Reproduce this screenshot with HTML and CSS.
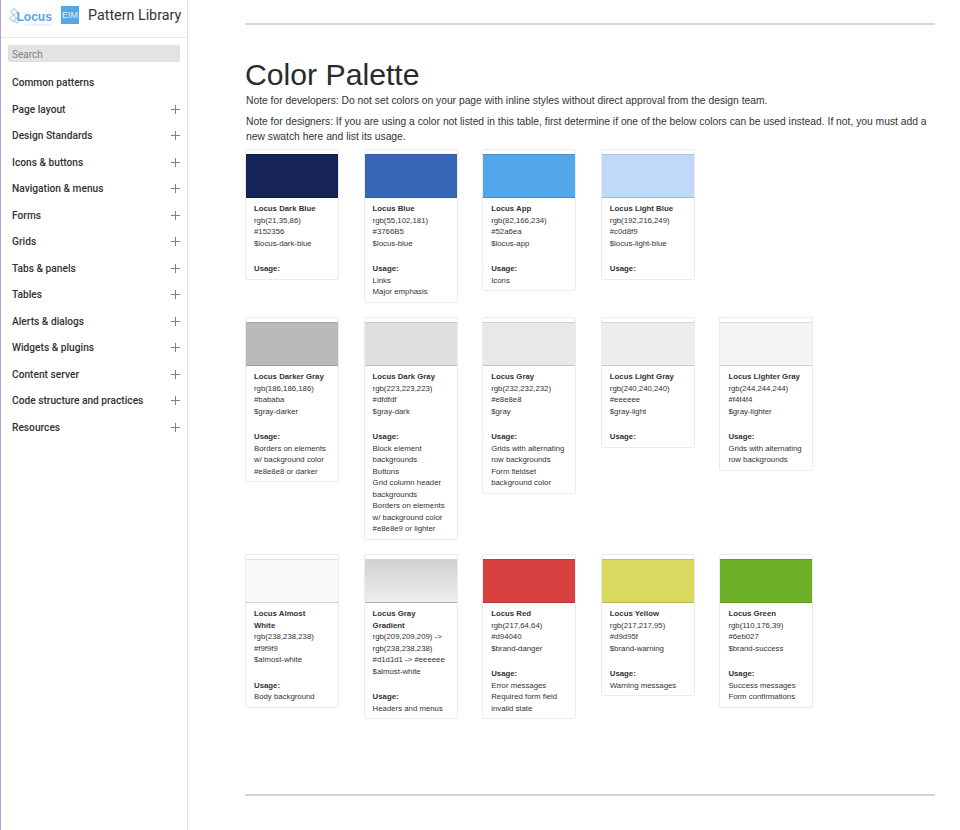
FILE: index.html
```html
<!DOCTYPE html>
<html lang="en">
<head>
  <meta charset="UTF-8" />
  <title>Pattern Library - Color Palette</title>
  <link rel="stylesheet" href="styles.css">
</head>
<body>

  <!-- Sidebar -->
  <aside class="sidebar">
    <div class="brand">
      <svg class="logo" width="52" height="26" viewBox="0 0 52 26" aria-label="Locus">
        <g fill="none" stroke="#a9cff3" stroke-width="1.1">
          <path d="M13 6.5l3.4 3.4-3.4 3.4-3.4-3.4z"/>
          <path d="M12 12.8l3.4 3.4-3.4 3.4-3.4-3.4z"/>
          <path d="M16 16l2.8 2.6-2.8 2.6-2.8-2.6z"/>
        </g>
        <text x="15.5" y="19" class="logo-word">Locus</text>
        <rect x="24" y="22.5" width="26" height="1" fill="#cfe3f7"/>
      </svg>
      <span class="eim">EIM</span>
      <span class="brand-title">Pattern Library</span>
    </div>
    <div class="search"><input type="text" placeholder="Search" /></div>
    <ul class="menu">
      <li class="item"><span>Common patterns</span></li>
      <li class="item"><span>Page layout</span><i class="plus"></i></li>
      <li class="item"><span>Design Standards</span><i class="plus"></i></li>
      <li class="item"><span>Icons &amp; buttons</span><i class="plus"></i></li>
      <li class="item"><span>Navigation &amp; menus</span><i class="plus"></i></li>
      <li class="item"><span>Forms</span><i class="plus"></i></li>
      <li class="item"><span>Grids</span><i class="plus"></i></li>
      <li class="item"><span>Tabs &amp; panels</span><i class="plus"></i></li>
      <li class="item"><span>Tables</span><i class="plus"></i></li>
      <li class="item"><span>Alerts &amp; dialogs</span><i class="plus"></i></li>
      <li class="item"><span>Widgets &amp; plugins</span><i class="plus"></i></li>
      <li class="item"><span>Content server</span><i class="plus"></i></li>
      <li class="item"><span>Code structure and practices</span><i class="plus"></i></li>
      <li class="item"><span>Resources</span><i class="plus"></i></li>
    </ul>
  </aside>

  <!-- Main content -->
  <main class="content">
    <hr class="rule rule-top" />
    <h1>Color Palette</h1>
    <p class="note">Note for developers: Do not set colors on your page with inline styles without direct approval from the design team.</p>
    <p class="note note-last">Note for designers: If you are using a color not listed in this table, first determine if one of the below colors can be used instead. If not, you must add a new swatch here and list its usage.</p>

    <div class="swatch-row">
      <div class="card">
        <div class="chip dark-blue"></div>
        <div class="info">
          <b>Locus Dark Blue</b>rgb(21,35,86)<br>#152356<br>$locus-dark-blue
          <b class="usage">Usage:</b>
        </div>
      </div>
      <div class="card">
        <div class="chip blue"></div>
        <div class="info">
          <b>Locus Blue</b>rgb(55,102,181)<br>#3766B5<br>$locus-blue
          <b class="usage">Usage:</b>Links<br>Major emphasis
        </div>
      </div>
      <div class="card">
        <div class="chip app"></div>
        <div class="info">
          <b>Locus App</b>rgb(82,166,234)<br>#52a6ea<br>$locus-app
          <b class="usage">Usage:</b>Icons
        </div>
      </div>
      <div class="card">
        <div class="chip light-blue"></div>
        <div class="info">
          <b>Locus Light Blue</b>rgb(192,216,249)<br>#c0d8f9<br>$locus-light-blue
          <b class="usage">Usage:</b>
        </div>
      </div>
    </div>

    <div class="swatch-row">
      <div class="card">
        <div class="chip darker-gray"></div>
        <div class="info">
          <b>Locus Darker Gray</b>rgb(186,186,186)<br>#bababa<br>$gray-darker
          <b class="usage">Usage:</b>Borders on elements<br>w/ background color<br>#e8e8e8 or darker
        </div>
      </div>
      <div class="card">
        <div class="chip dark-gray"></div>
        <div class="info">
          <b>Locus Dark Gray</b>rgb(223,223,223)<br>#dfdfdf<br>$gray-dark
          <b class="usage">Usage:</b>Block element<br>backgrounds<br>Buttons<br>Grid column header<br>backgrounds<br>Borders on elements<br>w/ background color<br>#e8e8e9 or lighter
        </div>
      </div>
      <div class="card">
        <div class="chip gray"></div>
        <div class="info">
          <b>Locus Gray</b>rgb(232,232,232)<br>#e8e8e8<br>$gray
          <b class="usage">Usage:</b>Grids with alternating<br>row backgrounds<br>Form fieldset<br>background color
        </div>
      </div>
      <div class="card">
        <div class="chip light-gray"></div>
        <div class="info">
          <b>Locus Light Gray</b>rgb(240,240,240)<br>#eeeeee<br>$gray-light
          <b class="usage">Usage:</b>
        </div>
      </div>
      <div class="card">
        <div class="chip lighter-gray"></div>
        <div class="info">
          <b>Locus Lighter Gray</b>rgb(244,244,244)<br>#f4f4f4<br>$gray-lighter
          <b class="usage">Usage:</b>Grids with alternating<br>row backgrounds
        </div>
      </div>
    </div>

    <div class="swatch-row">
      <div class="card">
        <div class="chip almost-white"></div>
        <div class="info">
          <b>Locus Almost<br>White</b>rgb(238,238,238)<br>#f9f9f9<br>$almost-white
          <b class="usage">Usage:</b>Body background
        </div>
      </div>
      <div class="card">
        <div class="chip gradient"></div>
        <div class="info">
          <b>Locus Gray<br>Gradient</b>rgb(209,209,209) -&gt;<br>rgb(238,238,238)<br>#d1d1d1 -&gt; #eeeeee<br>$almost-white
          <b class="usage">Usage:</b>Headers and menus
        </div>
      </div>
      <div class="card">
        <div class="chip red"></div>
        <div class="info">
          <b>Locus Red</b>rgb(217,64,64)<br>#d94040<br>$brand-danger
          <b class="usage">Usage:</b>Error messages<br>Required form field<br>invalid state
        </div>
      </div>
      <div class="card">
        <div class="chip yellow"></div>
        <div class="info">
          <b>Locus Yellow</b>rgb(217,217,95)<br>#d9d95f<br>$brand-warning
          <b class="usage">Usage:</b>Warning messages
        </div>
      </div>
      <div class="card">
        <div class="chip green"></div>
        <div class="info">
          <b>Locus Green</b>rgb(110,176,39)<br>#6eb027<br>$brand-success
          <b class="usage">Usage:</b>Success messages<br>Form confirmations
        </div>
      </div>
    </div>

    <hr class="rule rule-bottom" />
  </main>

</body>
</html>
```

FILE: styles.css
```css
html, body {
  height: 100%;
}
body {
  margin: 0;
  display: flex;
  align-items: stretch;
  min-height: 830px;
  font-family: "Liberation Sans", Arial, sans-serif;
  color: #333;
  background: #fff;
  overflow: hidden;
}

/* sidebar */
.sidebar {
  width: 188px;
  flex: none;
  box-sizing: border-box;
  height: 830px;
  border-left: 1px solid #b79fdc;
  border-right: 1px solid #e4e4e4;
}
.brand {
  height: 30px;
  padding-bottom: 7px;
  display: flex;
  align-items: center;
  border-bottom: 1px solid #e8e8e8;
}
.logo {
  flex: none;
}
.logo-word {
  font-family: "Liberation Sans", Arial, sans-serif;
  font-size: 12px;
  font-weight: bold;
  fill: #52a6ea;
}
.eim {
  width: 18px;
  height: 18px;
  margin-left: 8px;
  background: #52a6ea;
  color: #e8f3fd;
  font-size: 9px;
  line-height: 18px;
  text-align: center;
  flex: none;
}
.brand-title {
  margin-left: 9px;
  font-family: Roboto, "Liberation Sans", sans-serif;
  font-size: 14.3px;
  color: #333;
  white-space: nowrap;
}
.search {
  padding: 7px 7px 0 7px;
}
.search input {
  display: block;
  width: 100%;
  height: 17px;
  box-sizing: border-box;
  margin: 0;
  padding: 1px 3px 0;
  border: 1px solid #dfdfdf;
  border-radius: 2px;
  background: #e3e3e3;
  font-family: Roboto, "Liberation Sans", sans-serif;
  font-size: 10px;
}
.search input::placeholder {
  color: #808080;
}
.menu {
  list-style-type: none;
  margin: 7.5px 0 0;
  padding: 0;
}
.item {
  height: 26.5px;
  display: flex;
  align-items: center;
  justify-content: space-between;
  padding: 0 7px 0 11px;
  font-family: Roboto, "Liberation Sans", sans-serif;
  font-size: 10.2px;
  font-weight: 500;
  color: #333;
}
.plus {
  width: 9px;
  height: 9px;
  background:
    linear-gradient(#808080, #808080) center / 9px 1px no-repeat,
    linear-gradient(#808080, #808080) center / 1px 9px no-repeat;
}

/* main */
.content {
  width: 690px;
  margin-left: 57px;
  flex: none;
}
.rule {
  border: 0;
  height: 2px;
  background: #d6d6d6;
  margin: 0;
}
.rule-top {
  margin-top: 23px;
}
.rule-bottom {
  margin-top: 75px;
}
h1 {
  margin: 33px 0 0;
  font-size: 30.2px;
  font-weight: normal;
  line-height: 33px;
  color: #2b2b2b;
}
.note {
  margin: 2px 0 6px 1px;
  font-size: 10.3px;
  line-height: 15px;
  color: #333;
}
.note-last {
  margin-bottom: 5px;
}

/* swatches */
.swatch-row {
  display: flex;
  align-items: flex-start;
  gap: 24.6px;
  margin-bottom: 14.5px;
}
.card {
  width: 94px;
  box-sizing: border-box;
  padding-top: 4px;
  border: 1px solid #ececec;
  border-radius: 2px;
  background: #fff;
}
.chip {
  height: 44px;
  border-bottom: 1px solid rgba(0, 0, 0, 0.15);
  border-top: 1px solid rgba(0, 0, 0, 0.1);
  box-sizing: border-box;
}
.info {
  padding: 5px 7px 4px 8px;
  font-size: 7.8px;
  line-height: 11.5px;
  color: #333;
}
.info b {
  display: block;
}
.usage {
  margin-top: 14px;
}
.dark-blue { background: #152356; }
.blue { background: #3766b5; }
.app { background: #52a6ea; }
.light-blue { background: #c0d8f9; }
.darker-gray { background: #bababa; }
.dark-gray { background: #dfdfdf; }
.gray { background: #e8e8e8; }
.light-gray { background: #eeeeee; }
.lighter-gray { background: #f4f4f4; }
.almost-white { background: #f9f9f9; }
.gradient { background: linear-gradient(#d1d1d1, #eeeeee); }
.red { background: #d94040; }
.yellow { background: #d9d95f; }
.green { background: #6eb027; }
```
